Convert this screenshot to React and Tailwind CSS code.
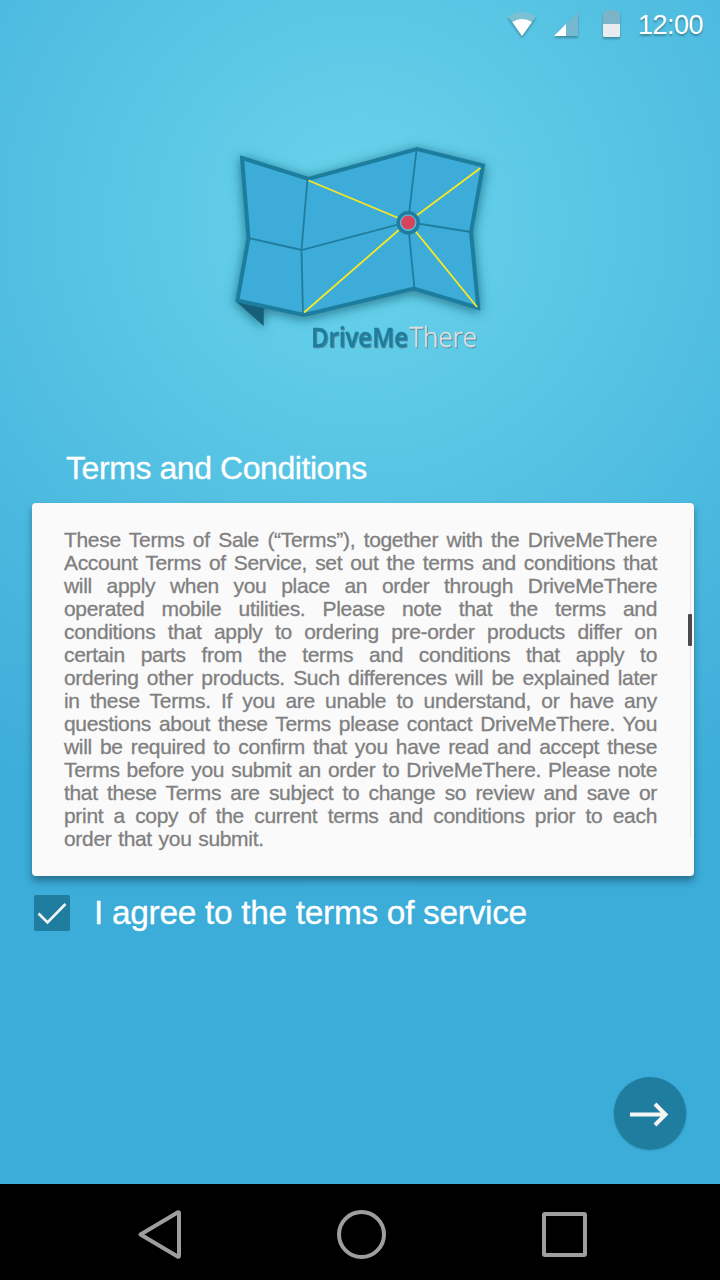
const termsLines = [
  'These Terms of Sale (“Terms”), together with the DriveMeThere',
  'Account Terms of Service, set out the terms and conditions that',
  'will apply when you place an order through DriveMeThere',
  'operated mobile utilities. Please note that the terms and',
  'conditions that apply to ordering pre-order products differ on',
  'certain parts from the terms and conditions that apply to',
  'ordering other products. Such differences will be explained later',
  'in these Terms. If you are unable to understand, or have any',
  'questions about these Terms please contact DriveMeThere. You',
  'will be required to confirm that you have read and accept these',
  'Terms before you submit an order to DriveMeThere. Please note',
  'that these Terms are subject to change so review and save or',
  'print a copy of the current terms and conditions prior to each',
  'order that you submit.',
];

function StatusBar() {
  return (
    <header className="flex h-[50px] items-start justify-end pr-[17px] text-white">
      <svg width="130" height="50" viewBox="500 0 130 50" className="drop-shadow-[0_2px_1px_rgba(0,0,0,0.28)]">
        <path d="M508 16.500Q522 7.500 536 16.500L522 36Z" fill="#7cc0d4" />
        <path d="M512.300 22Q522 15.800 532 22L522 36Z" fill="#fff" />
        <path d="M578 12V36H554Z" fill="#74b9d0" />
        <path d="M566 24V36H554Z" fill="#fff" />
        <path d="M603 24V13Q603 11.500 605 11.500H607V10H616V11.500H618Q620 11.500 620 13V24Z" fill="#7cb3c8" />
        <path d="M603 24H620V35.500Q620 37 618.500 37H604.500Q603 37 603 35.500Z" fill="#e8ecef" />
      </svg>
      <span className="ml-[8px] mt-[8px] whitespace-nowrap text-[27px] leading-[34px] tracking-[-0.5px] [text-shadow:0_2px_2px_rgba(0,0,0,0.3)]">12:00</span>
    </header>
  );
}

function Logo() {
  return (
    <svg width="280" height="230" viewBox="220 130 280 230" className="ml-[220px] mt-[80px] shrink-0">
      <defs>
        <filter id="map-shadow" x="-20%" y="-20%" width="140%" height="140%">
          <feDropShadow dx="0" dy="2" stdDeviation="6" floodColor="#0b4c60" floodOpacity="0.7" />
        </filter>
        <filter id="word-shadow" x="-10%" y="-20%" width="120%" height="150%">
          <feDropShadow dx="0.8" dy="1" stdDeviation="0.4" floodColor="#4a5a60" floodOpacity="0.65" />
        </filter>
      </defs>
      <g filter="url(#map-shadow)">
        <path d="M235.500 301L263.700 326V305Z" fill="#145f78" />
        <path d="M242 158L308.500 179L417 149L483 165.500L471 232L478.300 308L414 288.500L304 315L237.500 300.500L248.500 238Z" fill="#3cacd9" stroke="#1f7e9f" strokeWidth="4" />
      </g>
      <g fill="none" stroke="#1f7e9f" strokeWidth="1.8">
        <path d="M307.500 179L301.500 250L303 314M416.500 150L408 223L414.500 289M248.500 238L301.500 250L408 222L471 232" />
      </g>
      <path d="M308.500 180.500L408 222L480.500 168M408 222L304 312.500M408 222L477 307" fill="none" stroke="#f7e823" strokeWidth="1.8" />
      <circle cx="408.200" cy="222.800" r="10" fill="#5fc0e2" stroke="#1f7e9f" strokeWidth="3.600" />
      <circle cx="408.200" cy="222.500" r="7" fill="#d84459" />
      <g filter="url(#word-shadow)" fontFamily="'Open Sans', sans-serif" fontSize="27">
        <text x="311" y="346.500" textLength="97" lengthAdjust="spacingAndGlyphs" fontWeight="600" fill="#1f7e9f" stroke="#1f7e9f" strokeWidth="0.500" strokeLinejoin="round">DriveMe</text>
        <text x="409.500" y="346.500" textLength="67.500" lengthAdjust="spacingAndGlyphs" fontWeight="300" fill="#dedede" stroke="#dedede" strokeWidth="0.400">There</text>
      </g>
    </svg>
  );
}

function TermsCard() {
  return (
    <section className="ml-8 flex h-[373px] w-[662px] shrink-0 justify-between rounded-[4px] bg-[#fafafa] pl-8 pr-0.5 shadow-[0_5px_7px_rgba(20,60,80,0.5)]">
      <div className="w-[593px] pt-[25px] text-[21px] leading-[23px] tracking-[-0.32px] text-[#808080] [-webkit-text-stroke:0.3px_#808080]">
        {termsLines.map((line, i) => (
          <p
            key={line}
            className={
              i === termsLines.length - 1
                ? 'whitespace-nowrap [word-spacing:1.2px]'
                : 'whitespace-nowrap [text-align-last:justify]'
            }
          >
            {line}
          </p>
        ))}
      </div>
      <div className="mt-[26px] flex h-[309px] w-1 flex-col items-center">
        <div className="h-[85px] w-px bg-[#e4e4e4]" />
        <div className="h-8 w-1 rounded-[1px] bg-[#4a4a4a]" />
        <div className="w-px grow bg-[#e4e4e4]" />
      </div>
    </section>
  );
}

export default function App() {
  return (
    <div className="flex h-[1280px] w-[720px] flex-col overflow-hidden bg-[#3cacd9] bg-[radial-gradient(circle_670px_at_360px_220px,#69d4eb,#3cacd9)] font-['Liberation_Sans',sans-serif]">
      <StatusBar />
      <Logo />
      <h1 className="ml-[66px] mt-[88px] h-[55px] whitespace-nowrap text-[32px] leading-10 tracking-[-0.43px] text-white [-webkit-text-stroke:0.3px_#fff]">Terms and Conditions</h1>
      <TermsCard />
      <label className="ml-[34px] mt-[19px] flex h-9 items-center gap-6 text-white">
        <span className="flex size-9 shrink-0 rounded-[2px] bg-[#1f7e9f]">
          <svg width="36" height="36" viewBox="0 0 36 36" fill="none" stroke="#f5f8fa" strokeWidth="2.600">
            <path d="M4.500 18.500L13.500 27.500L31.500 9" />
          </svg>
        </span>
        <span className="whitespace-nowrap text-[33.500px] leading-9 tracking-[-0.33px] [-webkit-text-stroke:0.3px_#fff]">I agree to the terms of service</span>
      </label>
      <button type="button" aria-label="Continue" className="ml-[614px] mt-[146px] flex size-[72px] shrink-0 rounded-full bg-[#1f7e9f] shadow-[0_1px_2px_rgba(10,80,90,0.6)]">
        <svg width="72" height="72" viewBox="0 0 72 72" fill="none" stroke="#f5f5f5" strokeWidth="4">
          <path d="M16 37.500H52M41 27L51.500 37.500L41 48" />
        </svg>
      </button>
      <nav className="mt-auto flex h-24 shrink-0 bg-black">
        <svg width="720" height="96" viewBox="0 1184 720 96" fill="none" stroke="#9e9e9e" strokeWidth="4" strokeLinejoin="round">
          <path d="M140.500 1234.500L178 1212.200Q179 1212 179 1213V1256Q179 1257 178 1256.800Z" />
          <circle cx="361.500" cy="1234.500" r="22.500" />
          <rect x="544" y="1214" width="41" height="41" rx="1" />
        </svg>
      </nav>
    </div>
  );
}
